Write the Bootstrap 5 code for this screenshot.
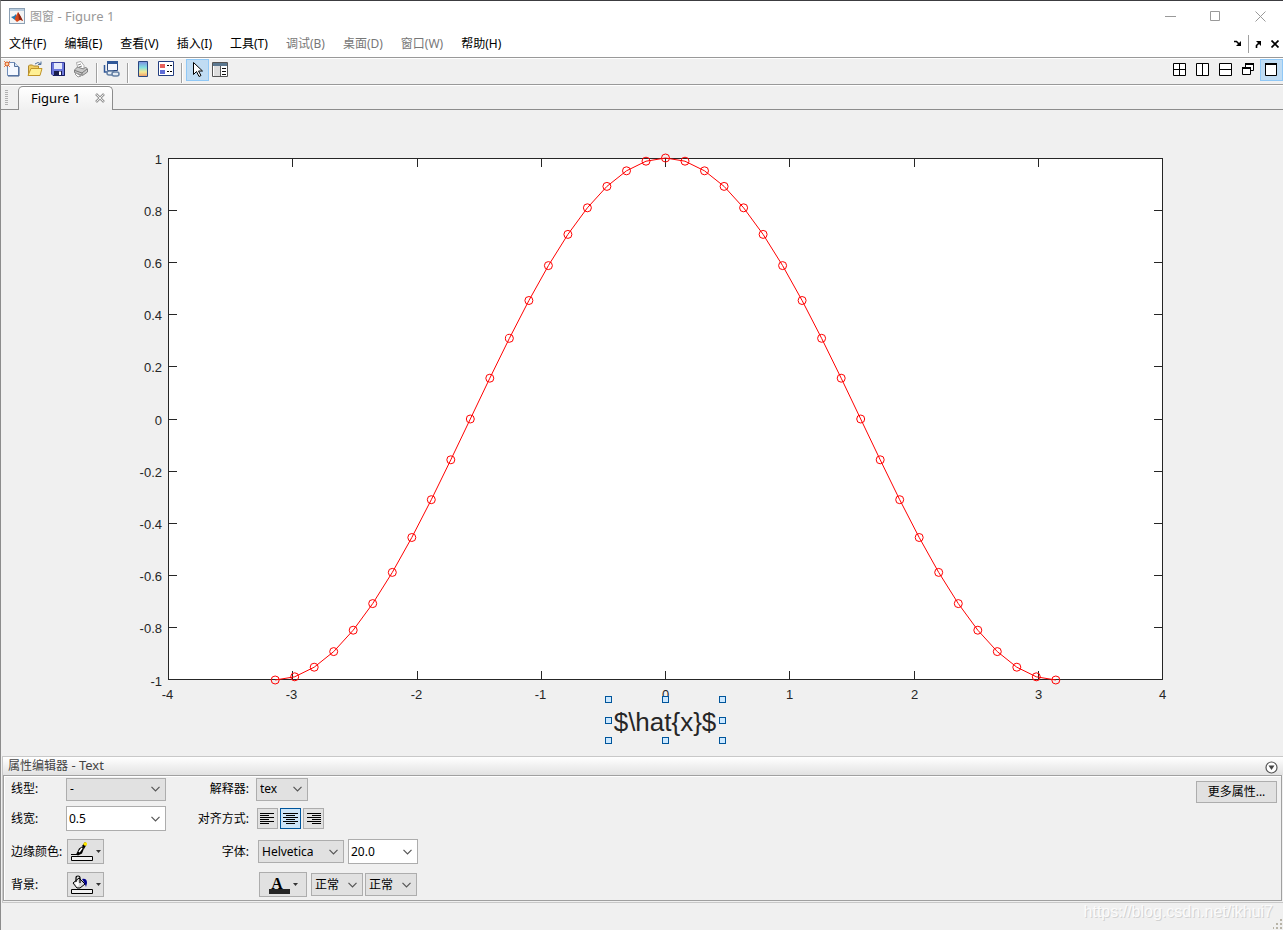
<!DOCTYPE html>
<html lang="zh-CN">
<head>
<meta charset="utf-8">
<meta name="viewport" content="width=device-width, initial-scale=1">
<title>图窗 - Figure 1</title>
<link href="https://cdn.jsdelivr.net/npm/bootstrap@5.3.0/dist/css/bootstrap.min.css" rel="stylesheet">
<style>
  body { font: 12px/18px "Noto Sans", "Noto Sans CJK SC", sans-serif; color: #000; background: #f0f0f0; }
  .app-window { border-top: 1px solid #3c3c40; border-left: 1px solid #8c8c8c; }
  svg { display: block; flex: none; }
  button { border: 0; padding: 0; background: none; color: inherit; }
  .title-row { height: 30px; background: #fff; color: #999; }
  .latin-part { font-size: 13px; }
  .sys-btn { width: 45px; height: 28px; }
  .menu-row { height: 27px; background: #fff; border-bottom: 1px solid #999; }
  .menu-list { gap: 18px; padding-left: 8px; }
  .menu-list a { color: #000; text-decoration: none; white-space: nowrap; }
  .menu-list a.is-off { color: #777; }
  .menu-sep { width: 1px; height: 18px; margin: 0 6px; background: #a0a0a0; }
  .tool-row { height: 27px; border-top: 1px solid #fff; border-bottom: 1px solid #999; }
  .tool-btn { width: 23px; height: 22px; padding: 0 2px 2px 0; display: flex; align-items: center; justify-content: center; }
  .tool-btn.is-on, .tool-btn.is-layout { padding: 0 0 1px; }
  .tool-btn.is-on { background: #c0dcf3; outline: 1px solid #90c8f6; outline-offset: -1px; }
  .tool-sep { width: 2px; height: 20px; margin: 0 3px; background: #a0a0a0; border-right: 1px solid #fff; }
  .tab-row { height: 25px; border-top: 1px solid #fff; border-bottom: 1px solid #8c8c8c; padding-left: 4px; }
  .tab-grip { width: 3px; height: 16px; margin-right: 10px; background: repeating-linear-gradient(#b0b0b0 0 1px, #f0f0f0 1px 2px); }
  .doc-tab { position: relative; height: 24px; width: 95px; border: 1px solid #8c8c8c; border-bottom: 0; border-radius: 5px 5px 0 0;
    background: linear-gradient(#fff, #f0f0f0); font-size: 13px; margin-bottom: -1px; padding: 0 7px 2px 12px; }
  .figure-area text { font-family: "Liberation Sans", sans-serif; font-size: 13px; fill: #262626; }
  .figure-area text.axis-title { font-size: 26px; }
  .prop-frame { border: 1px solid #c8c8c8; border-right: 0; margin-left: 1px; }
  .prop-head { height: 18px; background: linear-gradient(#fff, #e2e2e2); color: #444; padding: 0 5px; line-height: 16px; }
  .prop-body { border: 1px solid #a0a0a0; margin: 0 1px 1px 0; box-shadow: inset 1px 1px #fff; }
  .prop-grid { display: grid; grid-template-columns: 55px 130px 53px 7px auto; grid-template-rows: 26px 33px 33px 33px;
    align-items: center; padding-left: 7px; margin-bottom: -1px; }
  .prop-grid label, .prop-grid .side-label { white-space: nowrap; }
  .side-label { justify-self: end; }
  .combo { height: 23px; border: 1px solid #adadad; border-radius: 0; color: #000; padding: 0 20px 0 3px; appearance: none;
    background: #e1e1e1 url("data:image/svg+xml,%3Csvg xmlns='http://www.w3.org/2000/svg' width='9' height='6'%3E%3Cpath d='M.5 .8L4.500 4.800L8.500 .8' fill='none' stroke='%23555' stroke-width='1.200'/%3E%3C/svg%3E") no-repeat right 5px center; }
  .combo.is-edit { background-color: #fff; height: 25px; padding-left: 2px; }
  .w-wide { width: 100px; }
  .w-font { width: 86px; }
  .w-size { width: 70px; }
  .w-small { width: 52px; }
  .face-btn { border: 1px solid #adadad; background: #e1e1e1; height: 25px; width: 37px; display: flex; align-items: center; justify-content: center; gap: 3px; }
  .face-btn.is-color { margin-left: 1px; }
  .face-btn.is-align { width: 21px; height: 21px; }
  .face-btn.is-align.is-on { border-color: #00559b; background: #cce4f7; }
  .face-btn.is-text { width: 48px; margin-right: 2px; }
  .align-set { gap: 2px; padding-left: 1px; }
  .font-set { gap: 4px; padding-left: 2px; }
  .style-set { gap: 2px; padding-left: 3px; }
  .more-btn { border: 1px solid #adadad; background: #e1e1e1; width: 81px; height: 22px; margin: 5px 4px 0 0; }
  .status-row { min-height: 27px; color: #fbfbfb; font: 16px/18px "Liberation Sans", sans-serif; text-shadow: 1px 1px #d2d2d2; }
</style>
</head>
<body>
<div class="app-window d-flex flex-column min-vh-100">

  <header class="title-row d-flex align-items-center">
    <svg class="ms-2 me-1" width="17" height="17" viewBox="0 0 17 17"><rect x=".5" y=".5" width="15" height="15" fill="#f4f4f4" stroke="#8ca0b4"/><path d="M1 1h14v2H1z" fill="#b9cde0"/><path d="M2 9l3-1 2-2 1 4-2 2z" fill="#2877b0"/><path d="M6 10q2-4 3-6 2 4 5 9-2-1-3-1l-3 2-2-2z" fill="#d6481c"/><path d="M9 4q3 4 5 9-3-2-4-1z" fill="#8e2413"/></svg>
    <span class="flex-grow-1">图窗<span class="latin-part"> - Figure 1</span></span>
    <button class="sys-btn" aria-label="最小化"><svg class="m-auto" width="11" height="11"><path d="M0 5.500h11" stroke="#999"/></svg></button>
    <button class="sys-btn" aria-label="最大化"><svg class="m-auto" width="11" height="11"><path d="M.5 .5h9v9h-9z" fill="none" stroke="#999"/></svg></button>
    <button class="sys-btn" aria-label="关闭"><svg class="m-auto" width="11" height="11"><path d="M.5 .5l10 10M10.500 .5l-10 10" stroke="#999"/></svg></button>
  </header>

  <nav class="menu-row d-flex align-items-center">
    <div class="menu-list d-flex flex-grow-1">
      <a href="#">文件(F)</a><a href="#">编辑(E)</a><a href="#">查看(V)</a><a href="#">插入(I)</a><a href="#">工具(T)</a><a href="#" class="is-off">调试(B)</a><a href="#" class="is-off">桌面(D)</a><a href="#" class="is-off">窗口(W)</a><a href="#">帮助(H)</a>
    </div>
    <button aria-label="停靠"><svg width="8" height="8" viewBox="0 0 8 8"><path d="M0 1.500h2.500L5 4" fill="none" stroke="#000" stroke-width="1.600"/><path d="M7 1v5H2z"/></svg></button>
    <span class="menu-sep"></span>
    <button aria-label="取消停靠"><svg width="8" height="8" viewBox="0 0 8 8"><path d="M1.500 8V5.500L4 3" fill="none" stroke="#000" stroke-width="1.600"/><path d="M6 6V1H1z"/></svg></button>
    <button class="ms-2 me-1" aria-label="关闭图窗"><svg width="8" height="8"><path d="M.5 .5l7 7M7.500 .5l-7 7" stroke="#000" stroke-width="1.700"/></svg></button>
  </nav>

  <div class="tool-row d-flex align-items-start" role="toolbar">
    <button class="tool-btn" aria-label="新建图窗"><svg width="18" height="18" viewBox="0 0 18 18"><path d="M4.500 2.500h7l4 4v9h-11z" fill="#f4f8ff" stroke="#6f8cb8"/><path d="M16 7v9H5" fill="none" stroke="#3d5a8c"/><path d="M11.500 2.500v4h4" fill="#cfe0f5" stroke="#55719b"/><path d="M1 1l6 6M7 1L1 7" stroke="#e87a45"/><circle cx="4" cy="4" r="2" fill="#ffd0a0" stroke="#d95319"/></svg></button>
    <button class="tool-btn" aria-label="打开"><svg width="18" height="18" viewBox="0 0 18 18"><path d="M2.500 15V6l1-1h3l1 1h5v3" fill="#f2ce60" stroke="#b08a30"/><path d="M2 15.500l3-7h11l-2 7z" fill="#fff094" stroke="#c09428"/><path d="M9 4q3-3 6 0M15 1.500v3h-3" fill="none" stroke="#52729c"/></svg></button>
    <button class="tool-btn" aria-label="保存"><svg width="16" height="16" viewBox="0 0 16 16"><path d="M1.500 1.500h13v13H3l-1.500-1.500z" fill="#6c78dc" stroke="#3a40a0"/><path d="M4 2h8v6H4z" fill="#e5e9fa"/><path d="M14.500 2v12.500H3" fill="none" stroke="#171b60"/><path d="M4 10h8v4H4z" fill="#191d4b"/><path d="M9 10.500h2V14H9z" fill="#fff"/></svg></button>
    <button class="tool-btn" aria-label="打印"><svg width="16" height="18" viewBox="0 0 16 18"><path d="M5 9L3.500 2.500 8 1.500l3 4V9z" fill="#fff" stroke="#aaa"/><path d="M5 5l3-1M6 7l3-1" stroke="#888"/><path d="M1.500 10l3-3 6 2 2-2 2 2v3l-5 3.500-8-3z" fill="#c8c8c8" stroke="#808080"/><path d="M2 10.500l7 2.500 5-4M9 13v2" fill="none" stroke="#777"/><path d="M3 13l5 3-3 1-3-3z" fill="#fff" stroke="#999"/></svg></button>
    <span class="tool-sep mt-1"></span>
    <button class="tool-btn" aria-label="链接绘图"><svg width="18" height="18" viewBox="0 0 18 18"><path d="M4.500 1.500h10v9h-10z" fill="#f4f6fc" stroke="#2a4780"/><path d="M4 1h11v3H4z" fill="#2f5799"/><path d="M1.500 5v7h5" fill="none" stroke="#2f5799" stroke-width="1.500"/><g fill="#e4ebf3" stroke="#6480a4" stroke-width="1.500"><rect x="4" y="11" width="7" height="4" rx="2"/><rect x="9" y="12" width="7" height="4" rx="2"/></g></svg></button>
    <span class="tool-sep mt-1"></span>
    <button class="tool-btn" aria-label="颜色栏"><svg width="12" height="16"><defs><linearGradient id="bar" x2="0" y2="1"><stop stop-color="#7c8ee2"/><stop offset=".4" stop-color="#83e0df"/><stop offset=".7" stop-color="#f5e994"/><stop offset="1" stop-color="#ee9a68"/></linearGradient></defs><path d="M1.500 .5h9v15h-9z" fill="url(#bar)" stroke="#2a4780"/></svg></button>
    <button class="tool-btn" aria-label="图例"><svg width="16" height="16"><path d="M.5 .5h15v14H.5z" fill="#fff" stroke="#243e80"/><path d="M2 3h5v4H2z" fill="#e7605a"/><path d="M2 9h5v4H2z" fill="#5f6cd6"/><path d="M9 4.500h2m1 0h2M9 10.500h2m1 0h2" stroke="#000"/></svg></button>
    <span class="tool-sep mt-1"></span>
    <button class="tool-btn is-on" aria-label="编辑绘图"><svg width="11" height="17"><path d="M1.500 1.500v12l3-3 2.500 5 2-1-2.500-4.500h4z" fill="#fff" stroke="#000"/></svg></button>
    <button class="tool-btn is-layout" aria-label="属性检查器"><svg width="17" height="16"><path d="M.5 .5h15v14H.5z" fill="#fff" stroke="#555"/><path d="M1 1h14v3H1z" fill="#5c7890"/><path d="M2 4h6v10H2z" fill="#ddd"/><path d="M8.500 4v11" stroke="#555"/><path d="M10 6.500h4m-4 3h4m-4 3h4" stroke="#111"/></svg></button>
    <span class="flex-grow-1"></span>
    <button class="tool-btn is-layout" aria-label="平铺"><svg width="13" height="13"><path d="M.5 .5h12v12H.5zM6.500 0v13M0 6.500h13" fill="#fff" stroke="#000"/></svg></button>
    <button class="tool-btn is-layout" aria-label="左右平铺"><svg width="13" height="13"><path d="M.5 .5h12v12H.5zM6.500 0v13" fill="#fff" stroke="#000"/></svg></button>
    <button class="tool-btn is-layout" aria-label="上下平铺"><svg width="13" height="13"><path d="M.5 .5h12v12H.5zM0 6.500h13" fill="#fff" stroke="#000"/></svg></button>
    <button class="tool-btn is-layout" aria-label="浮动"><svg width="13" height="13"><path d="M3.500 1.500h8v6h-8z" fill="#fff" stroke="#000"/><path d="M3 1h9" stroke="#000" stroke-width="2"/><path d="M.5 5.500h8v6h-8z" fill="#fff" stroke="#000"/><path d="M0 5h9" stroke="#000" stroke-width="2"/></svg></button>
    <button class="tool-btn is-on" aria-label="最大化图窗"><svg width="13" height="13"><path d="M.5 .5h11v12H.5z" fill="#fff" stroke="#000"/><path d="M0 1h12" stroke="#000" stroke-width="2"/></svg></button>
  </div>

  <div class="tab-row d-flex align-items-end">
    <span class="tab-grip align-self-center"></span>
    <div class="doc-tab d-flex align-items-center">
      <span class="flex-grow-1">Figure 1</span>
      <button aria-label="关闭选项卡"><svg width="10" height="10"><path d="M1 1l8 8M9 1l-8 8" stroke="#999" stroke-width="2.600"/><path d="M1.500 1.500l7 7M8.500 1.500l-7 7" stroke="#eee"/></svg></button>
    </div>
  </div>

  <main class="figure-area flex-grow-1">
    <svg class="w-100" viewBox="1 110 1282 646" role="img" aria-label="余弦曲线">
      <rect x="168.500" y="158.500" width="994" height="521" fill="#fff" stroke="#262626"/>
      <g id="ticks" stroke="#262626"></g>
      <g id="tick-labels"></g>
      <g id="curve" fill="none" stroke="#f00"></g>
      <text class="axis-title" x="665" y="731" text-anchor="middle">$\hat{x}$</text>
      <g id="handles" fill="#cce8ff" stroke="#00559b"></g>
    </svg>
  </main>

  <section class="prop-frame">
    <div class="prop-head d-flex align-items-start justify-content-between">
      <span>属性编辑器<span class="latin-part"> - Text</span></span>
      <button class="mt-1 pt-0 align-self-start" aria-label="折叠"><svg width="13" height="13"><circle cx="6.500" cy="6.500" r="5.500" fill="#fff" stroke="#555" stroke-width="1.200"/><path d="M3.500 4.500h6L6.500 9z" fill="#444"/></svg></button>
    </div>
    <div class="prop-body d-flex justify-content-between align-items-start">
      <div class="prop-grid">
        <label for="lineStyle">线型:</label>
        <select id="lineStyle" class="combo w-wide"><option>-</option></select>
        <label class="side-label" for="interp">解释器:</label><span></span>
        <select id="interp" class="combo w-small"><option>tex</option></select>

        <label for="lineWidth">线宽:</label>
        <select id="lineWidth" class="combo is-edit w-wide"><option>0.5</option></select>
        <span class="side-label">对齐方式:</span><span></span>
        <div class="align-set d-flex" role="group" aria-label="对齐方式">
          <button class="face-btn is-align" aria-label="左对齐"><svg width="15" height="11"><path d="M0 .5h14M0 2.500h9M0 4.500h14M0 6.500h9M0 8.500h14M0 10.500h9" stroke="#000"/></svg></button>
          <button class="face-btn is-align is-on" aria-label="居中"><svg width="15" height="11"><path d="M0 .5h15M3 2.500h9M0 4.500h15M3 6.500h9M0 8.500h15M3 10.500h9" stroke="#000"/></svg></button>
          <button class="face-btn is-align" aria-label="右对齐"><svg width="15" height="11"><path d="M1 .5h14M6 2.500h9M1 4.500h14M6 6.500h9M1 8.500h14M6 10.500h9" stroke="#000"/></svg></button>
        </div>

        <label for="edgeColor">边缘颜色:</label>
        <button id="edgeColor" class="face-btn is-color"><svg width="22" height="20"><path d="M.5 14.500h21v4H.5z" fill="#f0f0f0" stroke="#000"/><path d="M0 12.500h6" stroke="#000"/><path d="M5 12.500l3-6 3-2 2 2-2 5-4 2z"/><path d="M8 10l3-4" stroke="#fff" stroke-width="1.500"/><path d="M11 4l3-4 2 2-3 5z"/><path d="M12 2l2-2 2 1v2l-2 1z" fill="#ffe800"/></svg><svg width="5" height="3"><path d="M0 0h5L2.500 3z" fill="#333"/></svg></button>
        <label class="side-label" for="fontName">字体:</label><span></span>
        <div class="font-set d-flex align-items-center">
          <select id="fontName" class="combo w-font"><option>Helvetica</option></select>
          <select class="combo is-edit w-size" aria-label="字体大小"><option>20.0</option></select>
        </div>

        <label for="backColor">背景:</label>
        <button id="backColor" class="face-btn is-color"><svg width="22" height="20"><path d="M.5 14.500h21v4H.5z" fill="#f0f0f0" stroke="#000"/><path d="M2 8l6-5 6 6-5 4H6z" fill="#d8d8d8" stroke="#000"/><path d="M5 7V3q0-2 2-2t2 2v5" fill="none" stroke="#000" stroke-width="1.200"/><path d="M4 8l3-2 1 4-2 2z" fill="#fff"/><path d="M11 4q5-1 5 4l-1 4q-1-4-4-8z" fill="#00008b"/></svg><svg width="5" height="3"><path d="M0 0h5L2.500 3z" fill="#333"/></svg></button>
        <span></span><span></span>
        <div class="style-set d-flex align-items-center">
          <button class="face-btn is-text" aria-label="字体颜色"><svg width="21" height="21" viewBox="0 0 21 21"><path d="M0 15h21v5H0z" fill="#262626"/><text x="8" y="15" text-anchor="middle" font-family="Liberation Serif, serif" font-weight="bold" font-size="16">A</text></svg><svg width="5" height="3"><path d="M0 0h5L2.500 3z" fill="#333"/></svg></button>
          <select class="combo w-small" aria-label="字体粗细"><option>正常</option></select>
          <select class="combo w-small" aria-label="字体角度"><option>正常</option></select>
        </div>
      </div>
      <button class="more-btn">更多属性...</button>
    </div>
  </section>

  <footer class="status-row d-flex align-items-start justify-content-end">
    <span>https://blog.csdn.net/ikhui7</span>
    <svg class="align-self-end" width="10" height="12"><path d="M7 1h2v2H7zM3 5h2v2H3zM7 5h2v2H7zM0 9h1v2H0zM3 9h2v2H3zM7 9h2v2H7z" fill="#b8b4a8"/></svg>
  </footer>
</div>

<script src="https://cdn.jsdelivr.net/npm/bootstrap@5.3.0/dist/js/bootstrap.bundle.min.js"></script>
<script>
  const sx = x => 665.5 + x * 124.25, sy = y => 419 - y * 261;
  const fill = (id, html) => document.getElementById(id).innerHTML = html;
  let ticks = '', labels = '';
  for (let v = -4; v <= 4; v++) {
    const x = Math.floor(sx(v)) + 0.5;
    if (Math.abs(v) < 4) ticks += `<path d="M${x} 158v9M${x} 671v9"/>`;
    labels += `<text x="${x - (v < 0 ? 1 : 0)}" y="699" text-anchor="middle">${v}</text>`;
  }
  for (let i = -5; i <= 5; i++) {
    const y = Math.floor(sy(i / 5)) + 0.5;
    if (Math.abs(i) < 5) ticks += `<path d="M168 ${y}h9M1154 ${y}h9"/>`;
    labels += `<text x="162" y="${y + 5.5}" text-anchor="end">${i / 5}</text>`;
  }
  const pts = Array.from({ length: 41 }, (_, i) => {
    const t = (i - 20) * Math.PI / 20;
    return [sx(t).toFixed(1), sy(Math.cos(t)).toFixed(1)];
  });
  fill('ticks', ticks);
  fill('tick-labels', labels);
  fill('curve', `<polyline points="${pts.join(' ')}"/>` + pts.map(p => `<circle cx="${p[0]}" cy="${p[1]}" r="4"/>`).join(''));
  fill('handles', [699, 720, 740].flatMap(y => [608, 665, 722].filter(x => y !== 720 || x !== 665)
    .map(x => `<rect x="${x - 2.5}" y="${y - 2.5}" width="6" height="6"/>`)).join(''));
</script>
</body>
</html>
